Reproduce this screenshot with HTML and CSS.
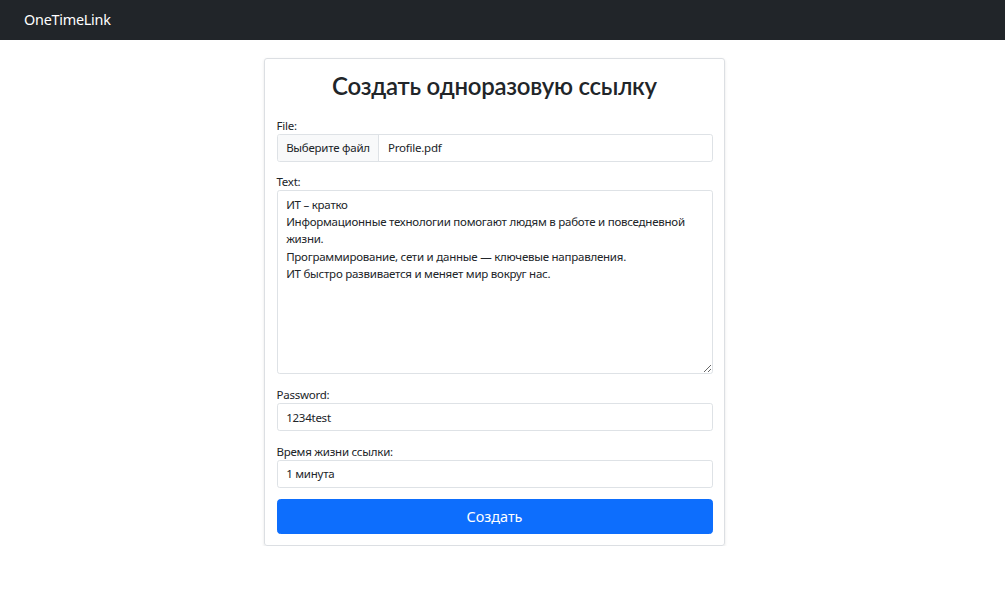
FILE: index.html
```html
<!DOCTYPE html>
<html lang="ru">
<head>
<meta charset="utf-8">
<title>OneTimeLink</title>
<link rel="stylesheet" href="styles.css">
</head>
<body>
<nav class="navbar">
  <a class="brand" href="#">OneTimeLink</a>
</nav>
<main class="page">
  <div class="card">
    <h1 class="title">Создать одноразовую ссылку</h1>
    <form class="form">
      <div class="group">
        <label class="label">File:</label>
        <div class="file-input">
          <span class="file-btn">Выберите файл</span>
          <span class="file-name">Profile.pdf</span>
        </div>
      </div>
      <div class="group">
        <label class="label">Text:</label>
        <textarea class="control textarea" rows="10">ИТ – кратко
Информационные технологии помогают людям в работе и повседневной жизни.
Программирование, сети и данные — ключевые направления.
ИТ быстро развивается и меняет мир вокруг нас.</textarea>
      </div>
      <div class="group">
        <label class="label">Password:</label>
        <input class="control" type="text" value="1234test">
      </div>
      <div class="group">
        <label class="label">Время жизни ссылки:</label>
        <input class="control" type="text" value="1 минута">
      </div>
      <button class="submit" type="button">Создать</button>
    </form>
  </div>
</main>
</body>
</html>
```

FILE: styles.css
```css
* { box-sizing: border-box; }
html, body { margin: 0; padding: 0; }
body {
  font-family: "Noto Sans", "Open Sans", sans-serif;
  font-size: 11.52px;
  line-height: 1.5;
  letter-spacing: -0.25px;
  color: #212529;
  background: #fff;
}
.navbar {
  height: 40px;
  background: #212529;
  display: flex;
  align-items: center;
  padding-left: 24px;
}
.brand {
  color: #fff;
  font-size: 14.4px;
  text-decoration: none;
  line-height: 1.5;
}
.page {
  padding: 18px 0 0 264px;
}
.card {
  width: 461px;
  border: 1px solid #dcdfe3;
  border-radius: 3px;
  box-shadow: 0 1.5px 3px rgba(0,0,0,0.1);
  padding: 10.5px 11.5px 11.5px;
}
.title {
  margin: 0 0 14.6px;
  font-family: "Lato", "Noto Sans", sans-serif;
  font-size: 24px;
  font-weight: 600;
  letter-spacing: -0.25px;
  line-height: 32.4px;
  text-align: center;
}
.form { display: flex; flex-direction: column; }
.group { margin-bottom: 11.5px; display: flex; flex-direction: column; align-items: flex-start; }
.label { display: block; line-height: 17.28px; }
.control, .file-input {
  width: 100%;
  border: 1px solid #dee2e6;
  border-radius: 2.7px;
  font: inherit;
  letter-spacing: inherit;
  color: #212529;
  background: #fff;
  padding: 4.32px 8.64px;
  line-height: 17.28px;
  margin: 0;
  outline: none;
}
.textarea { resize: vertical; display: block; height: 184px; }
.file-input {
  display: flex;
  padding: 0;
  overflow: hidden;
}
.file-btn {
  background: #f8f9fa;
  border-right: 1px solid #dee2e6;
  padding: 4.32px 8.64px;
  line-height: 17.28px;
}
.file-name {
  padding: 4.32px 8.64px;
  line-height: 17.28px;
}
.submit {
  width: 100%;
  height: 34.6px;
  border: 1px solid #0d6efd;
  background: #0d6efd;
  color: #fff;
  font-family: inherit;
  font-size: 14.4px;
  letter-spacing: 0;
  border-radius: 3.6px;
  padding: 0;
}
```
